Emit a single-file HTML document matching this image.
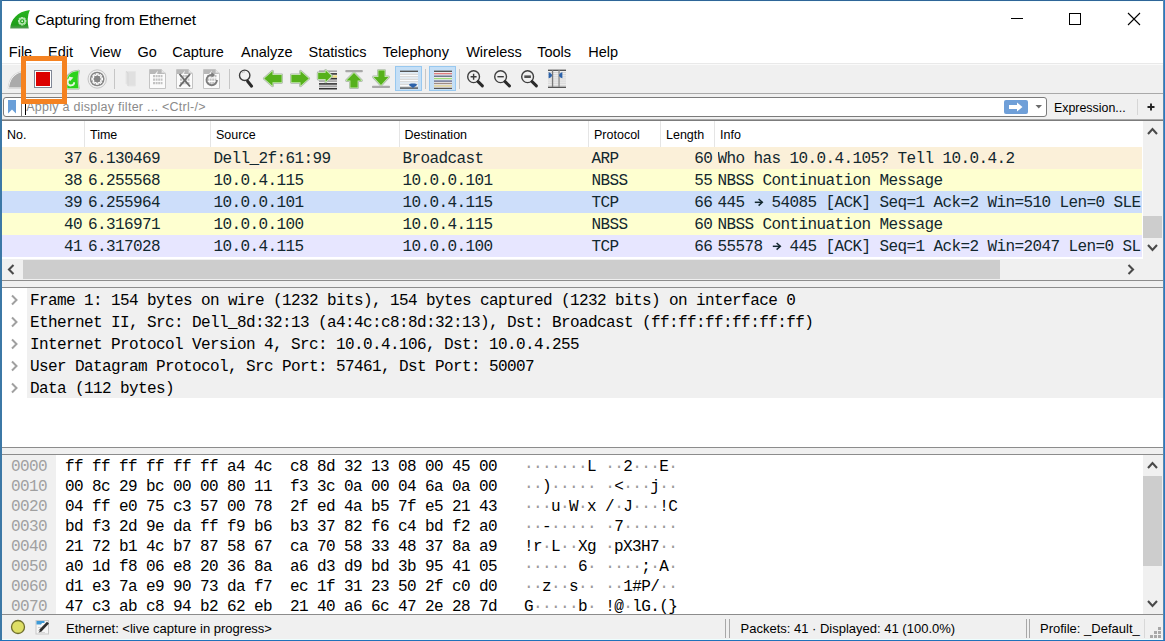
<!DOCTYPE html>
<html><head><meta charset="utf-8"><style>
html,body{margin:0;padding:0;}
body{width:1165px;height:641px;overflow:hidden;position:relative;background:#fff;}
body>div,body>svg{position:absolute;}
.t{white-space:pre;}
</style></head><body>
<div style="left:0px;top:0px;width:1165px;height:641px;background:#ffffff;"></div>
<div style="left:1px;top:63px;width:1163px;height:1px;background:#e9e9e9;"></div>
<div style="left:1px;top:64px;width:1163px;height:1px;background:#fafafa;"></div>
<div style="left:1px;top:65px;width:1163px;height:28px;background:#f0f0f0;"></div>
<div style="left:1px;top:93px;width:1163px;height:1px;background:#a9a9a9;"></div>
<div style="left:1px;top:94px;width:1163px;height:25px;background:#f0f0f0;"></div>
<div style="left:1px;top:119px;width:1163px;height:1px;background:#a9a9a9;"></div>
<div style="left:1px;top:120px;width:1163px;height:1px;background:#7c7c7c;"></div>
<svg style="left:8px;top:8px" width="24" height="23" viewBox="0 0 24 23">
<defs><linearGradient id="fg" x1="0" y1="0" x2="0" y2="1"><stop offset="0" stop-color="#27b51f"/><stop offset=".8" stop-color="#1f9e1a"/><stop offset="1" stop-color="#5a9a5a"/></linearGradient></defs>
<path d="M2.2 20.6 C2.6 12 9 3.5 21.8 2 C19.5 7.5 19 14 20.8 20.6 Z" fill="url(#fg)"/>
<path d="M16.85 12.67 L17.76 12.64 L17.76 13.76 L16.85 13.73 L16.44 14.70 L17.11 15.32 L16.32 16.11 L15.70 15.44 L14.73 15.85 L14.76 16.76 L13.64 16.76 L13.67 15.85 L12.70 15.44 L12.08 16.11 L11.29 15.32 L11.96 14.70 L11.55 13.73 L10.64 13.76 L10.64 12.64 L11.55 12.67 L11.96 11.70 L11.29 11.08 L12.08 10.29 L12.70 10.96 L13.67 10.55 L13.64 9.64 L14.76 9.64 L14.73 10.55 L15.70 10.96 L16.32 10.29 L17.11 11.08 L16.44 11.70 Z" fill="none" stroke="#b4e6b0" stroke-width="1.3"/>
<circle cx="14.2" cy="13.2" r="1" fill="#d8f4d8"/>
</svg>
<div class="t" style="left:35px;top:12.20px;font-size:15.5px;line-height:15.5px;font-family:'Liberation Sans', sans-serif;color:#000;letter-spacing:-.2px">Capturing from Ethernet</div>
<div style="left:1011px;top:18px;width:12px;height:1px;background:#000;"></div>
<div style="left:1069px;top:13px;width:10px;height:10px;border:1px solid #000"></div>
<svg style="left:1127px;top:12px" width="14" height="14" viewBox="0 0 14 14"><path d="M1 1 L13 13 M13 1 L1 13" stroke="#000" stroke-width="1.1"/></svg>
<div class="t" style="left:8.799999999999999px;top:45.25px;font-size:14.5px;line-height:14.5px;font-family:'Liberation Sans', sans-serif;color:#000;">File</div>
<div class="t" style="left:48.1px;top:45.25px;font-size:14.5px;line-height:14.5px;font-family:'Liberation Sans', sans-serif;color:#000;">Edit</div>
<div class="t" style="left:89.9px;top:45.25px;font-size:14.5px;line-height:14.5px;font-family:'Liberation Sans', sans-serif;color:#000;">View</div>
<div class="t" style="left:137.39999999999998px;top:45.25px;font-size:14.5px;line-height:14.5px;font-family:'Liberation Sans', sans-serif;color:#000;">Go</div>
<div class="t" style="left:172.2px;top:45.25px;font-size:14.5px;line-height:14.5px;font-family:'Liberation Sans', sans-serif;color:#000;">Capture</div>
<div class="t" style="left:241.0px;top:45.25px;font-size:14.5px;line-height:14.5px;font-family:'Liberation Sans', sans-serif;color:#000;">Analyze</div>
<div class="t" style="left:308.5px;top:45.25px;font-size:14.5px;line-height:14.5px;font-family:'Liberation Sans', sans-serif;color:#000;">Statistics</div>
<div class="t" style="left:382.8px;top:45.25px;font-size:14.5px;line-height:14.5px;font-family:'Liberation Sans', sans-serif;color:#000;">Telephony</div>
<div class="t" style="left:466.2px;top:45.25px;font-size:14.5px;line-height:14.5px;font-family:'Liberation Sans', sans-serif;color:#000;">Wireless</div>
<div class="t" style="left:537.2px;top:45.25px;font-size:14.5px;line-height:14.5px;font-family:'Liberation Sans', sans-serif;color:#000;">Tools</div>
<div class="t" style="left:588.2px;top:45.25px;font-size:14.5px;line-height:14.5px;font-family:'Liberation Sans', sans-serif;color:#000;">Help</div>
<svg style="left:4px;top:70px" width="20" height="20" viewBox="0 0 20 20"><path d="M5 17.5 C6 10 10 4 17 2.5 L17 17.5 Z" fill="#aaaaaa" stroke="#d4d4d4" stroke-width="2.6" stroke-linejoin="round"/><path d="M5 17.5 C6 10 10 4 17 2.5 L17 17.5 Z" fill="#aaaaaa" stroke="#ffffff" stroke-width="1.2" stroke-linejoin="round"/><path d="M5 17.5 C6 10 10 4 17 2.5 L17 17.5 Z" fill="#aaaaaa"/></svg>
<div style="left:34px;top:70px;width:16px;height:16px;border:1px solid #7f8796;background:#fff"></div>
<div style="left:36px;top:72px;width:14px;height:14px;background:#dc0000;"></div>
<svg style="left:65px;top:68px" width="16" height="22" viewBox="0 0 16 22"><path d="M2.3 20.3 L2.3 12 C2.3 7 6 3.6 13.6 2.9 C12.4 8 12.4 14 13.4 20.3 Z" fill="none" stroke="#a6a6a6" stroke-width="2.4" stroke-linejoin="round"/><path d="M2.3 20.3 L2.3 12 C2.3 7 6 3.6 13.6 2.9 C12.4 8 12.4 14 13.4 20.3 Z" fill="none" stroke="#c6f2bc" stroke-width="1.2" stroke-linejoin="round"/><path d="M2.3 20.3 L2.3 12 C2.3 7 6 3.6 13.6 2.9 C12.4 8 12.4 14 13.4 20.3 Z" fill="#2bd21c"/><path d="M9.2 14.2 A3.3 3.3 0 1 1 5.2 10.9" fill="none" stroke="#e4f8de" stroke-width="1.9"/><path d="M3.6 8.6 L8.4 9.6 L5 13.2Z" fill="#e4f8de"/></svg>
<svg style="left:87px;top:69px" width="21" height="21" viewBox="0 0 21 21"><circle cx="10.2" cy="10" r="9.2" fill="#f0f0f0" stroke="#c4c4c4" stroke-width="1"/><circle cx="10.2" cy="10" r="7.3" fill="#858585"/><path d="M14.11 9.14 L15.42 9.09 L15.42 10.91 L14.11 10.86 L13.57 12.16 L14.54 13.05 L13.25 14.34 L12.36 13.37 L11.06 13.91 L11.11 15.22 L9.29 15.22 L9.34 13.91 L8.04 13.37 L7.15 14.34 L5.86 13.05 L6.83 12.16 L6.29 10.86 L4.98 10.91 L4.98 9.09 L6.29 9.14 L6.83 7.84 L5.86 6.95 L7.15 5.66 L8.04 6.63 L9.34 6.09 L9.29 4.78 L11.11 4.78 L11.06 6.09 L12.36 6.63 L13.25 5.66 L14.54 6.95 L13.57 7.84 Z" fill="none" stroke="#ffffff" stroke-width="1.2" stroke-linejoin="miter"/><circle cx="10.2" cy="10" r="2.5" fill="#858585"/></svg>
<div style="left:114px;top:69px;width:1px;height:20px;background:#c6c6c6;"></div>
<div style="left:229px;top:69px;width:1px;height:20px;background:#c6c6c6;"></div>
<div style="left:425px;top:69px;width:1px;height:20px;background:#c6c6c6;"></div>
<div style="left:459px;top:69px;width:1px;height:20px;background:#c6c6c6;"></div>
<svg style="left:123px;top:70px" width="15" height="18" viewBox="0 0 15 18"><path d="M3 1.5 L12.5 1.5 L12.5 16 L5 16 L5 14 L3 14 Z" fill="#e0e0e0" stroke="#e6e6e6" stroke-width="1"/><path d="M3 1.5 L5 3 L5 16" fill="none" stroke="#d6d6d6" stroke-width="1"/></svg>
<svg style="left:149px;top:68px" width="18" height="21" viewBox="0 0 18 21"><path d="M0.5 1.5 L12.5 1.5 L16.5 5.5 L16.5 20.5 L0.5 20.5 Z" fill="#fbfbfb" stroke="#c4c4c4" stroke-width="1"/><path d="M1 2 L12.3 2 L16 5.7 L16 5.9 L1 5.9 Z" fill="#b8b8b8"/><path d="M6 5.9 L9 2.5 L8 5.9Z" fill="#f4f4f4"/><path d="M12.5 1.5 L12.5 5 L16.5 5" fill="#e8e8e8" stroke="#c4c4c4" stroke-width=".8"/><path d="M4 8.2 L13.5 8.2" stroke="#c2c2c2" stroke-width="2.2" stroke-dasharray="2 0.6 2 0.6 2 0.6 2"/><path d="M4 11.7 L13.5 11.7" stroke="#c2c2c2" stroke-width="2.2" stroke-dasharray="2 0.6 2 0.6 2 0.6 2"/><path d="M4 15.2 L13.5 15.2" stroke="#c2c2c2" stroke-width="2.2" stroke-dasharray="2 0.6 2 0.6 2 0.6 2"/></svg>
<svg style="left:176px;top:68px" width="18" height="21" viewBox="0 0 18 21"><path d="M0.5 1.5 L12.5 1.5 L16.5 5.5 L16.5 20.5 L0.5 20.5 Z" fill="#fbfbfb" stroke="#c4c4c4" stroke-width="1"/><path d="M1 2 L12.3 2 L16 5.7 L16 5.9 L1 5.9 Z" fill="#b8b8b8"/><path d="M6 5.9 L9 2.5 L8 5.9Z" fill="#f4f4f4"/><path d="M12.5 1.5 L12.5 5 L16.5 5" fill="#e8e8e8" stroke="#c4c4c4" stroke-width=".8"/><path d="M4 8.2 L13.5 8.2" stroke="#c2c2c2" stroke-width="2.2" stroke-dasharray="2 0.6 2 0.6 2 0.6 2"/><path d="M4 11.7 L13.5 11.7" stroke="#c2c2c2" stroke-width="2.2" stroke-dasharray="2 0.6 2 0.6 2 0.6 2"/><path d="M4 15.2 L13.5 15.2" stroke="#c2c2c2" stroke-width="2.2" stroke-dasharray="2 0.6 2 0.6 2 0.6 2"/><path d="M3.5 6 L14 18.5 M14 6 L3.5 18.5" stroke="#6a6a6a" stroke-width="1.9"/></svg>
<svg style="left:203px;top:68px" width="18" height="21" viewBox="0 0 18 21"><path d="M0.5 1.5 L12.5 1.5 L16.5 5.5 L16.5 20.5 L0.5 20.5 Z" fill="#fbfbfb" stroke="#c4c4c4" stroke-width="1"/><path d="M1 2 L12.3 2 L16 5.7 L16 5.9 L1 5.9 Z" fill="#b8b8b8"/><path d="M6 5.9 L9 2.5 L8 5.9Z" fill="#f4f4f4"/><path d="M12.5 1.5 L12.5 5 L16.5 5" fill="#e8e8e8" stroke="#c4c4c4" stroke-width=".8"/><path d="M4 8.2 L13.5 8.2" stroke="#c2c2c2" stroke-width="2.2" stroke-dasharray="2 0.6 2 0.6 2 0.6 2"/><path d="M4 11.7 L13.5 11.7" stroke="#c2c2c2" stroke-width="2.2" stroke-dasharray="2 0.6 2 0.6 2 0.6 2"/><path d="M4 15.2 L13.5 15.2" stroke="#c2c2c2" stroke-width="2.2" stroke-dasharray="2 0.6 2 0.6 2 0.6 2"/><path d="M13.9 12 A5.2 5.2 0 1 1 9.4 6.9" fill="none" stroke="#7c7c7c" stroke-width="1.9"/><path d="M8.4 4.2 L12.2 7 L8.4 9.6Z" fill="#7c7c7c"/></svg>
<svg style="left:237px;top:69px" width="18" height="20" viewBox="0 0 18 20"><circle cx="7.7" cy="6.3" r="5.2" fill="#f2f2f2" stroke="#3c3c3c" stroke-width="1.4"/><path d="M5 4 A3.2 3.2 0 0 1 8 2.8" fill="none" stroke="#bbb" stroke-width="1"/><path d="M10.6 12.2 L14.6 17.2" stroke="#2a2a2a" stroke-width="3" stroke-linecap="round"/></svg>
<svg style="left:262px;top:69px" width="22" height="19" viewBox="0 0 22 19"><path d="M2.3 9.5 L10.5 2.3 L10.5 6 L19.6 6 L19.6 13.3 L10.5 13.3 L10.5 16.8 Z" fill="none" stroke="#a9b3a9" stroke-width="2.8" stroke-linejoin="round"/><path d="M2.3 9.5 L10.5 2.3 L10.5 6 L19.6 6 L19.6 13.3 L10.5 13.3 L10.5 16.8 Z" fill="none" stroke="#c9ecb4" stroke-width="1.5" stroke-linejoin="round"/><path d="M2.3 9.5 L10.5 2.3 L10.5 6 L19.6 6 L19.6 13.3 L10.5 13.3 L10.5 16.8 Z" fill="#56b11c"/></svg>
<svg style="left:289px;top:69px" width="22" height="19" viewBox="0 0 22 19"><path d="M19.7 9.5 L11.5 2.3 L11.5 6 L2.4 6 L2.4 13.3 L11.5 13.3 L11.5 16.8 Z" fill="none" stroke="#a9b3a9" stroke-width="2.8" stroke-linejoin="round"/><path d="M19.7 9.5 L11.5 2.3 L11.5 6 L2.4 6 L2.4 13.3 L11.5 13.3 L11.5 16.8 Z" fill="none" stroke="#c9ecb4" stroke-width="1.5" stroke-linejoin="round"/><path d="M19.7 9.5 L11.5 2.3 L11.5 6 L2.4 6 L2.4 13.3 L11.5 13.3 L11.5 16.8 Z" fill="#56b11c"/></svg>
<svg style="left:316px;top:68px" width="23" height="22" viewBox="0 0 23 22"><rect x="3" y="2.4" width="18" height="1.6" fill="#a4a4a4"/><rect x="13" y="5.1" width="8" height="1.6" fill="#333"/><rect x="14" y="7.4" width="7" height="2.2" fill="#f0dc80"/><rect x="14" y="9.9" width="7" height="1.6" fill="#333"/><rect x="3" y="12.3" width="18" height="1.6" fill="#a4a4a4"/><rect x="3" y="15.1" width="18" height="1.6" fill="#333"/><rect x="3" y="17.4" width="18" height="1.6" fill="#a4a4a4"/><rect x="3" y="19.9" width="18" height="1.6" fill="#333"/><path d="M15.6 8 L9.6 2.4 L9.6 5 L2.2 5 L2.2 11 L9.6 11 L9.6 13.8 Z" fill="none" stroke="#a9b3a9" stroke-width="2.8" stroke-linejoin="round"/><path d="M15.6 8 L9.6 2.4 L9.6 5 L2.2 5 L2.2 11 L9.6 11 L9.6 13.8 Z" fill="none" stroke="#c9ecb4" stroke-width="1.5" stroke-linejoin="round"/><path d="M15.6 8 L9.6 2.4 L9.6 5 L2.2 5 L2.2 11 L9.6 11 L9.6 13.8 Z" fill="#56b11c"/></svg>
<svg style="left:343px;top:68px" width="22" height="22" viewBox="0 0 22 22"><rect x="2.3" y="2" width="17.5" height="2.2" rx=".8" fill="#a8a8a8"/><path d="M11 5 L18.4 12.6 L14.6 12.6 L14.6 19.6 L7.4 19.6 L7.4 12.6 L3.6 12.6 Z" fill="none" stroke="#a9b3a9" stroke-width="2.8" stroke-linejoin="round"/><path d="M11 5 L18.4 12.6 L14.6 12.6 L14.6 19.6 L7.4 19.6 L7.4 12.6 L3.6 12.6 Z" fill="none" stroke="#c9ecb4" stroke-width="1.5" stroke-linejoin="round"/><path d="M11 5 L18.4 12.6 L14.6 12.6 L14.6 19.6 L7.4 19.6 L7.4 12.6 L3.6 12.6 Z" fill="#56b11c"/></svg>
<svg style="left:370px;top:68px" width="22" height="22" viewBox="0 0 22 22"><rect x="2" y="17.8" width="18" height="2.2" rx=".8" fill="#a8a8a8"/><path d="M11 17 L18.4 9 L14.6 9 L14.6 2.6 L8.4 2.6 L8.4 9 L3.6 9 Z" fill="none" stroke="#a9b3a9" stroke-width="2.8" stroke-linejoin="round"/><path d="M11 17 L18.4 9 L14.6 9 L14.6 2.6 L8.4 2.6 L8.4 9 L3.6 9 Z" fill="none" stroke="#c9ecb4" stroke-width="1.5" stroke-linejoin="round"/><path d="M11 17 L18.4 9 L14.6 9 L14.6 2.6 L8.4 2.6 L8.4 9 L3.6 9 Z" fill="#56b11c"/></svg>
<div style="left:395px;top:66px;width:25px;height:23px;background:#c5dff6;border:1px solid #98c8ef"></div>
<svg style="left:400px;top:70px" width="18" height="19" viewBox="0 0 18 19"><rect x="0" y="0.6" width="18" height="1.4" fill="#555"/><rect x="0" y="2.6" width="18" height="1" fill="#ffffff"/><rect x="0" y="3.6" width="18" height="1.3" fill="#dcdad6"/><rect x="0" y="5.1" width="18" height="1" fill="#ffffff"/><rect x="0" y="6.1" width="18" height="1.3" fill="#dcdad6"/><rect x="0" y="7.6" width="18" height="1" fill="#ffffff"/><rect x="0" y="8.6" width="18" height="1.3" fill="#dcdad6"/><rect x="0" y="10.1" width="18" height="1" fill="#ffffff"/><rect x="0" y="11.1" width="18" height="1.3" fill="#dcdad6"/><rect x="0" y="12.6" width="18" height="1" fill="#ffffff"/><rect x="0" y="13.6" width="18" height="1.3" fill="#dcdad6"/><rect x="0" y="15.1" width="18" height="1" fill="#ffffff"/><rect x="0" y="16.1" width="18" height="1.3" fill="#dcdad6"/><rect x="0" y="17.4" width="18" height="1.4" fill="#555"/><path d="M9 14.6 C9 13 17 13 17 14.6 C17 16 14.5 16.5 13 18 C11.5 16.5 9 16 9 14.6Z" fill="#2c62aa"/></svg>
<div style="left:429px;top:66px;width:25px;height:23px;background:#c5dff6;border:1px solid #98c8ef"></div>
<svg style="left:434px;top:70px" width="18" height="19" viewBox="0 0 18 19"><rect x="0" y="0.6" width="18" height="1.5" fill="#555555"/><rect x="0" y="2.1" width="18" height=".95" fill="#f6eeee"/><rect x="0" y="3.0500000000000003" width="18" height="1.5" fill="#e07a7a"/><rect x="0" y="4.550000000000001" width="18" height=".95" fill="#f6eeee"/><rect x="0" y="5.5" width="18" height="1.5" fill="#707890"/><rect x="0" y="7.0" width="18" height=".95" fill="#f6eeee"/><rect x="0" y="7.95" width="18" height="1.5" fill="#9fdc7c"/><rect x="0" y="9.45" width="18" height=".95" fill="#f6eeee"/><rect x="0" y="10.4" width="18" height="1.5" fill="#6c7090"/><rect x="0" y="11.9" width="18" height=".95" fill="#f6eeee"/><rect x="0" y="12.85" width="18" height="1.5" fill="#9c8c84"/><rect x="0" y="14.35" width="18" height=".95" fill="#f6eeee"/><rect x="0" y="15.3" width="18" height="1.5" fill="#e6d088"/><rect x="0" y="16.8" width="18" height=".95" fill="#f6eeee"/><rect x="0" y="17.750000000000004" width="18" height="1.5" fill="#555555"/></svg>
<svg style="left:466px;top:69px" width="20" height="20" viewBox="0 0 20 20"><circle cx="7.6" cy="7.7" r="5.9" fill="#f0f0f0" stroke="#3f3f3f" stroke-width="1.4"/><path d="M12.1 12.6 L16.4 16.9" stroke="#2a2a2a" stroke-width="3" stroke-linecap="round"/><path d="M4.6 7.7 L10.6 7.7 M7.6 4.7 L7.6 10.7" stroke="#3a3a3a" stroke-width="1.4"/></svg>
<svg style="left:493px;top:69px" width="20" height="20" viewBox="0 0 20 20"><circle cx="7.6" cy="7.7" r="5.9" fill="#f0f0f0" stroke="#3f3f3f" stroke-width="1.4"/><path d="M12.1 12.6 L16.4 16.9" stroke="#2a2a2a" stroke-width="3" stroke-linecap="round"/><path d="M4.4 7.7 L10.8 7.7" stroke="#3a3a3a" stroke-width="1.4"/></svg>
<svg style="left:520px;top:69px" width="20" height="20" viewBox="0 0 20 20"><circle cx="7.6" cy="7.7" r="5.9" fill="#f0f0f0" stroke="#3f3f3f" stroke-width="1.4"/><path d="M12.1 12.6 L16.4 16.9" stroke="#2a2a2a" stroke-width="3" stroke-linecap="round"/><rect x="4.3" y="6.4" width="6.6" height="2.6" fill="#505050"/></svg>
<svg style="left:547px;top:68px" width="20" height="21" viewBox="0 0 20 21"><rect x="1" y="1.6" width="18" height="1.4" fill="#555"/><rect x="1" y="18.6" width="18" height="1.4" fill="#555"/><rect x="1" y="4.2" width="18" height=".9" fill="#cfcfcf"/><rect x="1" y="6.300000000000001" width="18" height=".9" fill="#cfcfcf"/><rect x="1" y="8.4" width="18" height=".9" fill="#cfcfcf"/><rect x="1" y="10.5" width="18" height=".9" fill="#cfcfcf"/><rect x="1" y="12.600000000000001" width="18" height=".9" fill="#cfcfcf"/><rect x="1" y="14.7" width="18" height=".9" fill="#cfcfcf"/><rect x="1" y="16.8" width="18" height=".9" fill="#cfcfcf"/><rect x="4.9" y="2" width="1.3" height="17" fill="#7a7a7a"/><rect x="11.4" y="2" width="1.3" height="17" fill="#8a8a8a"/><path d="M1.6 4.2 C4 4.6 5 6.5 5 7.3 C5 8.3 4 10 1.6 10.2Z" fill="#2c62aa"/><path d="M15.4 4.2 C13 4.6 12 6.5 12 7.3 C12 8.3 13 10 15.4 10.2Z" fill="#2c62aa"/></svg>
<div style="left:265px;top:99px;width:6px;height:6px;background:#f58220;"></div>
<div style="left:3px;top:97px;width:1042px;height:18px;border:1px solid #7b7b7b;border-radius:3px;background:#fff"></div>
<div style="left:21px;top:98px;width:1px;height:18px;background:#7b7b7b;"></div>
<svg style="left:8px;top:100px" width="9" height="14" viewBox="0 0 9 14"><path d="M0 0 L8 0 L8 13.5 L4 9.5 L0 13.5 Z" fill="#6a9fd8"/></svg>
<div style="left:25px;top:104px;width:1px;height:11px;background:#000;"></div>
<div class="t" style="left:26.2px;top:101.24px;font-size:12.5px;line-height:12.5px;font-family:'Liberation Sans', sans-serif;color:#8a8a8a;letter-spacing:.27px">Apply a display filter ... &lt;Ctrl-/&gt;</div>
<div style="left:1004px;top:100px;width:24px;height:14px;background:#6f9fd8;border-radius:2px"></div>
<svg style="left:1007px;top:101px" width="18" height="12" viewBox="0 0 18 12"><path d="M2 4 L10 4 L10 1.5 L15.5 6 L10 10.5 L10 8 L2 8 Z" fill="#fff"/></svg>
<svg style="left:1035px;top:104px" width="8" height="5" viewBox="0 0 8 5"><path d="M0.5 1 L7 1 L3.75 4.5Z" fill="#6a6a6a"/></svg>
<div class="t" style="left:1054px;top:101.72px;font-size:12.4px;line-height:12.4px;font-family:'Liberation Sans', sans-serif;color:#000;">Expression...</div>
<div style="left:1137px;top:99px;width:1px;height:16px;background:#d6d6d6;"></div>
<svg style="left:1146px;top:102px" width="10" height="10" viewBox="0 0 10 10"><path d="M5 1.5 L5 8.5 M1.5 5 L8.5 5" stroke="#222" stroke-width="1.9"/></svg>
<div style="left:1px;top:121px;width:1142px;height:26px;background:#ffffff;"></div>
<div style="left:84px;top:121px;width:1px;height:26px;background:#e5e5e5;"></div>
<div style="left:210px;top:121px;width:1px;height:26px;background:#e5e5e5;"></div>
<div style="left:399px;top:121px;width:1px;height:26px;background:#e5e5e5;"></div>
<div style="left:588px;top:121px;width:1px;height:26px;background:#e5e5e5;"></div>
<div style="left:660px;top:121px;width:1px;height:26px;background:#e5e5e5;"></div>
<div style="left:714px;top:121px;width:1px;height:26px;background:#e5e5e5;"></div>
<div class="t" style="left:7.0px;top:129.04px;font-size:12.5px;line-height:12.5px;font-family:'Liberation Sans', sans-serif;color:#000;">No.</div>
<div class="t" style="left:90.0px;top:129.04px;font-size:12.5px;line-height:12.5px;font-family:'Liberation Sans', sans-serif;color:#000;">Time</div>
<div class="t" style="left:216.0px;top:129.04px;font-size:12.5px;line-height:12.5px;font-family:'Liberation Sans', sans-serif;color:#000;">Source</div>
<div class="t" style="left:404.5px;top:129.04px;font-size:12.5px;line-height:12.5px;font-family:'Liberation Sans', sans-serif;color:#000;">Destination</div>
<div class="t" style="left:594.0px;top:129.04px;font-size:12.5px;line-height:12.5px;font-family:'Liberation Sans', sans-serif;color:#000;">Protocol</div>
<div class="t" style="left:666.0px;top:129.04px;font-size:12.5px;line-height:12.5px;font-family:'Liberation Sans', sans-serif;color:#000;">Length</div>
<div class="t" style="left:720.1px;top:129.04px;font-size:12.5px;line-height:12.5px;font-family:'Liberation Sans', sans-serif;color:#000;">Info</div>
<div style="left:1px;top:147px;width:1141px;height:22px;background:#fbf0d9;"></div>
<div class="t" style="right:1083px;top:150.84px;font-size:16px;line-height:16px;font-family:'Liberation Mono', monospace;color:#12272e;text-align:right;letter-spacing:-0.6px;">37</div>
<div class="t" style="left:88px;top:150.84px;font-size:16px;line-height:16px;font-family:'Liberation Mono', monospace;color:#12272e;letter-spacing:-0.6px;">6.130469</div>
<div class="t" style="left:213.5px;top:150.84px;font-size:16px;line-height:16px;font-family:'Liberation Mono', monospace;color:#12272e;letter-spacing:-0.6px;">Dell_2f:61:99</div>
<div class="t" style="left:402.5px;top:150.84px;font-size:16px;line-height:16px;font-family:'Liberation Mono', monospace;color:#12272e;letter-spacing:-0.6px;">Broadcast</div>
<div class="t" style="left:591.5px;top:150.84px;font-size:16px;line-height:16px;font-family:'Liberation Mono', monospace;color:#12272e;letter-spacing:-0.6px;">ARP</div>
<div class="t" style="right:452.79999999999995px;top:150.84px;font-size:16px;line-height:16px;font-family:'Liberation Mono', monospace;color:#12272e;text-align:right;letter-spacing:-0.6px;">60</div>
<div class="t" style="left:717.5px;top:150.84px;width:424px;overflow:hidden;font-size:16px;line-height:16px;font-family:'Liberation Mono', monospace;color:#12272e;letter-spacing:-0.6px;">Who has 10.0.4.105? Tell 10.0.4.2</div>
<div style="left:1px;top:169px;width:1141px;height:22px;background:#feffd0;"></div>
<div class="t" style="right:1083px;top:172.84px;font-size:16px;line-height:16px;font-family:'Liberation Mono', monospace;color:#12272e;text-align:right;letter-spacing:-0.6px;">38</div>
<div class="t" style="left:88px;top:172.84px;font-size:16px;line-height:16px;font-family:'Liberation Mono', monospace;color:#12272e;letter-spacing:-0.6px;">6.255568</div>
<div class="t" style="left:213.5px;top:172.84px;font-size:16px;line-height:16px;font-family:'Liberation Mono', monospace;color:#12272e;letter-spacing:-0.6px;">10.0.4.115</div>
<div class="t" style="left:402.5px;top:172.84px;font-size:16px;line-height:16px;font-family:'Liberation Mono', monospace;color:#12272e;letter-spacing:-0.6px;">10.0.0.101</div>
<div class="t" style="left:591.5px;top:172.84px;font-size:16px;line-height:16px;font-family:'Liberation Mono', monospace;color:#12272e;letter-spacing:-0.6px;">NBSS</div>
<div class="t" style="right:452.79999999999995px;top:172.84px;font-size:16px;line-height:16px;font-family:'Liberation Mono', monospace;color:#12272e;text-align:right;letter-spacing:-0.6px;">55</div>
<div class="t" style="left:717.5px;top:172.84px;width:424px;overflow:hidden;font-size:16px;line-height:16px;font-family:'Liberation Mono', monospace;color:#12272e;letter-spacing:-0.6px;">NBSS Continuation Message</div>
<div style="left:1px;top:191px;width:1141px;height:22px;background:#cddefa;"></div>
<div class="t" style="right:1083px;top:194.84px;font-size:16px;line-height:16px;font-family:'Liberation Mono', monospace;color:#12272e;text-align:right;letter-spacing:-0.6px;">39</div>
<div class="t" style="left:88px;top:194.84px;font-size:16px;line-height:16px;font-family:'Liberation Mono', monospace;color:#12272e;letter-spacing:-0.6px;">6.255964</div>
<div class="t" style="left:213.5px;top:194.84px;font-size:16px;line-height:16px;font-family:'Liberation Mono', monospace;color:#12272e;letter-spacing:-0.6px;">10.0.0.101</div>
<div class="t" style="left:402.5px;top:194.84px;font-size:16px;line-height:16px;font-family:'Liberation Mono', monospace;color:#12272e;letter-spacing:-0.6px;">10.0.4.115</div>
<div class="t" style="left:591.5px;top:194.84px;font-size:16px;line-height:16px;font-family:'Liberation Mono', monospace;color:#12272e;letter-spacing:-0.6px;">TCP</div>
<div class="t" style="right:452.79999999999995px;top:194.84px;font-size:16px;line-height:16px;font-family:'Liberation Mono', monospace;color:#12272e;text-align:right;letter-spacing:-0.6px;">66</div>
<div class="t" style="left:717.5px;top:194.84px;width:424px;overflow:hidden;font-size:16px;line-height:16px;font-family:'Liberation Mono', monospace;color:#12272e;letter-spacing:-0.6px;">445   54085 [ACK] Seq=1 Ack=2 Win=510 Len=0 SLE</div>
<div style="left:1px;top:213px;width:1141px;height:22px;background:#feffd0;"></div>
<div class="t" style="right:1083px;top:216.84px;font-size:16px;line-height:16px;font-family:'Liberation Mono', monospace;color:#12272e;text-align:right;letter-spacing:-0.6px;">40</div>
<div class="t" style="left:88px;top:216.84px;font-size:16px;line-height:16px;font-family:'Liberation Mono', monospace;color:#12272e;letter-spacing:-0.6px;">6.316971</div>
<div class="t" style="left:213.5px;top:216.84px;font-size:16px;line-height:16px;font-family:'Liberation Mono', monospace;color:#12272e;letter-spacing:-0.6px;">10.0.0.100</div>
<div class="t" style="left:402.5px;top:216.84px;font-size:16px;line-height:16px;font-family:'Liberation Mono', monospace;color:#12272e;letter-spacing:-0.6px;">10.0.4.115</div>
<div class="t" style="left:591.5px;top:216.84px;font-size:16px;line-height:16px;font-family:'Liberation Mono', monospace;color:#12272e;letter-spacing:-0.6px;">NBSS</div>
<div class="t" style="right:452.79999999999995px;top:216.84px;font-size:16px;line-height:16px;font-family:'Liberation Mono', monospace;color:#12272e;text-align:right;letter-spacing:-0.6px;">60</div>
<div class="t" style="left:717.5px;top:216.84px;width:424px;overflow:hidden;font-size:16px;line-height:16px;font-family:'Liberation Mono', monospace;color:#12272e;letter-spacing:-0.6px;">NBSS Continuation Message</div>
<div style="left:1px;top:235px;width:1141px;height:22px;background:#e7e6ff;"></div>
<div class="t" style="right:1083px;top:238.84px;font-size:16px;line-height:16px;font-family:'Liberation Mono', monospace;color:#12272e;text-align:right;letter-spacing:-0.6px;">41</div>
<div class="t" style="left:88px;top:238.84px;font-size:16px;line-height:16px;font-family:'Liberation Mono', monospace;color:#12272e;letter-spacing:-0.6px;">6.317028</div>
<div class="t" style="left:213.5px;top:238.84px;font-size:16px;line-height:16px;font-family:'Liberation Mono', monospace;color:#12272e;letter-spacing:-0.6px;">10.0.4.115</div>
<div class="t" style="left:402.5px;top:238.84px;font-size:16px;line-height:16px;font-family:'Liberation Mono', monospace;color:#12272e;letter-spacing:-0.6px;">10.0.0.100</div>
<div class="t" style="left:591.5px;top:238.84px;font-size:16px;line-height:16px;font-family:'Liberation Mono', monospace;color:#12272e;letter-spacing:-0.6px;">TCP</div>
<div class="t" style="right:452.79999999999995px;top:238.84px;font-size:16px;line-height:16px;font-family:'Liberation Mono', monospace;color:#12272e;text-align:right;letter-spacing:-0.6px;">66</div>
<div class="t" style="left:717.5px;top:238.84px;width:424px;overflow:hidden;font-size:16px;line-height:16px;font-family:'Liberation Mono', monospace;color:#12272e;letter-spacing:-0.6px;">55578   445 [ACK] Seq=1 Ack=2 Win=2047 Len=0 SL</div>
<svg style="left:753.5px;top:197px" width="10" height="11" viewBox="0 0 10 11"><path d="M0.8 5.3 L8.2 5.3" stroke="#12272e" stroke-width="1.5"/><path d="M4.6 2 L8.3 5.3 L4.6 8.6" fill="none" stroke="#12272e" stroke-width="1.5"/></svg>
<svg style="left:771.5px;top:241px" width="10" height="11" viewBox="0 0 10 11"><path d="M0.8 5.3 L8.2 5.3" stroke="#12272e" stroke-width="1.5"/><path d="M4.6 2 L8.3 5.3 L4.6 8.6" fill="none" stroke="#12272e" stroke-width="1.5"/></svg>
<div style="left:1143px;top:121px;width:20px;height:138px;background:#f0f0f0;"></div>
<div style="left:1143px;top:216px;width:19px;height:22px;background:#cdcdcd;"></div>
<svg style="left:1146px;top:126px" width="13" height="10" viewBox="0 0 13 10"><path d="M2 8 L6.5 3 L11 8" fill="none" stroke="#4a4a4a" stroke-width="2.1"/></svg>
<svg style="left:1146px;top:243px" width="13" height="10" viewBox="0 0 13 10"><path d="M2 2 L6.5 7 L11 2" fill="none" stroke="#4a4a4a" stroke-width="2.1"/></svg>
<div style="left:1px;top:257px;width:1142px;height:2px;background:#ffffff;"></div>
<div style="left:1143px;top:257px;width:20px;height:2px;background:#f0f0f0;"></div>
<div style="left:1px;top:259px;width:1162px;height:21px;background:#f0f0f0;"></div>
<div style="left:23px;top:260px;width:977px;height:19px;background:#cdcdcd;"></div>
<svg style="left:6px;top:263px" width="10" height="13" viewBox="0 0 10 13"><path d="M7.5 2 L3 6.5 L7.5 11" fill="none" stroke="#4a4a4a" stroke-width="2.1"/></svg>
<svg style="left:1126px;top:263px" width="10" height="13" viewBox="0 0 10 13"><path d="M2.5 2 L7 6.5 L2.5 11" fill="none" stroke="#4a4a4a" stroke-width="2.1"/></svg>
<div style="left:1px;top:280px;width:1162px;height:1px;background:#8c8c8c;"></div>
<div style="left:1px;top:281px;width:1162px;height:6px;background:#f0f0f0;"></div>
<div style="left:1px;top:287px;width:1162px;height:1px;background:#8c8c8c;"></div>
<div style="left:1px;top:288px;width:1162px;height:159px;background:#ffffff;"></div>
<div style="left:27px;top:288px;width:1136px;height:110px;background:#f0f0f0;"></div>
<svg style="left:10px;top:294px" width="9" height="12" viewBox="0 0 9 12"><path d="M2 1.5 L6.5 6 L2 10.5" fill="none" stroke="#a0a0a0" stroke-width="2"/></svg>
<div class="t" style="left:30px;top:292.84px;font-size:16px;line-height:16px;font-family:'Liberation Mono', monospace;color:#000;letter-spacing:-0.6px;">Frame 1: 154 bytes on wire (1232 bits), 154 bytes captured (1232 bits) on interface 0</div>
<svg style="left:10px;top:316px" width="9" height="12" viewBox="0 0 9 12"><path d="M2 1.5 L6.5 6 L2 10.5" fill="none" stroke="#a0a0a0" stroke-width="2"/></svg>
<div class="t" style="left:30px;top:314.84px;font-size:16px;line-height:16px;font-family:'Liberation Mono', monospace;color:#000;letter-spacing:-0.6px;">Ethernet II, Src: Dell_8d:32:13 (a4:4c:c8:8d:32:13), Dst: Broadcast (ff:ff:ff:ff:ff:ff)</div>
<svg style="left:10px;top:338px" width="9" height="12" viewBox="0 0 9 12"><path d="M2 1.5 L6.5 6 L2 10.5" fill="none" stroke="#a0a0a0" stroke-width="2"/></svg>
<div class="t" style="left:30px;top:336.84px;font-size:16px;line-height:16px;font-family:'Liberation Mono', monospace;color:#000;letter-spacing:-0.6px;">Internet Protocol Version 4, Src: 10.0.4.106, Dst: 10.0.4.255</div>
<svg style="left:10px;top:360px" width="9" height="12" viewBox="0 0 9 12"><path d="M2 1.5 L6.5 6 L2 10.5" fill="none" stroke="#a0a0a0" stroke-width="2"/></svg>
<div class="t" style="left:30px;top:358.84px;font-size:16px;line-height:16px;font-family:'Liberation Mono', monospace;color:#000;letter-spacing:-0.6px;">User Datagram Protocol, Src Port: 57461, Dst Port: 50007</div>
<svg style="left:10px;top:382px" width="9" height="12" viewBox="0 0 9 12"><path d="M2 1.5 L6.5 6 L2 10.5" fill="none" stroke="#a0a0a0" stroke-width="2"/></svg>
<div class="t" style="left:30px;top:380.84px;font-size:16px;line-height:16px;font-family:'Liberation Mono', monospace;color:#000;letter-spacing:-0.6px;">Data (112 bytes)</div>
<div style="left:1px;top:447px;width:1162px;height:1px;background:#8c8c8c;"></div>
<div style="left:1px;top:448px;width:1162px;height:6px;background:#f0f0f0;"></div>
<div style="left:1px;top:454px;width:1162px;height:1px;background:#8c8c8c;"></div>
<div style="left:1px;top:455px;width:1162px;height:159px;background:#ffffff;"></div>
<div style="left:2px;top:455px;width:54px;height:159px;background:#f0f0f0;"></div>
<div class="t" style="left:11px;top:458.84px;font-size:16px;line-height:16px;font-family:'Liberation Mono', monospace;color:#a0a0a0;letter-spacing:-0.6px;">0000</div>
<div class="t" style="left:65px;top:458.84px;font-size:16px;line-height:16px;font-family:'Liberation Mono', monospace;color:#000;letter-spacing:-0.6px;">ff ff ff ff ff ff a4 4c  c8 8d 32 13 08 00 45 00</div>
<div class="t" style="left:524px;top:458.84px;font-size:16px;line-height:16px;font-family:'Liberation Mono', monospace;color:#000;letter-spacing:-0.6px;"><span style="color:#9a9a9a">·</span><span style="color:#9a9a9a">·</span><span style="color:#9a9a9a">·</span><span style="color:#9a9a9a">·</span><span style="color:#9a9a9a">·</span><span style="color:#9a9a9a">·</span><span style="color:#9a9a9a">·</span>L <span style="color:#9a9a9a">·</span><span style="color:#9a9a9a">·</span>2<span style="color:#9a9a9a">·</span><span style="color:#9a9a9a">·</span><span style="color:#9a9a9a">·</span>E<span style="color:#9a9a9a">·</span></div>
<div class="t" style="left:11px;top:478.84px;font-size:16px;line-height:16px;font-family:'Liberation Mono', monospace;color:#a0a0a0;letter-spacing:-0.6px;">0010</div>
<div class="t" style="left:65px;top:478.84px;font-size:16px;line-height:16px;font-family:'Liberation Mono', monospace;color:#000;letter-spacing:-0.6px;">00 8c 29 bc 00 00 80 11  f3 3c 0a 00 04 6a 0a 00</div>
<div class="t" style="left:524px;top:478.84px;font-size:16px;line-height:16px;font-family:'Liberation Mono', monospace;color:#000;letter-spacing:-0.6px;"><span style="color:#9a9a9a">·</span><span style="color:#9a9a9a">·</span>)<span style="color:#9a9a9a">·</span><span style="color:#9a9a9a">·</span><span style="color:#9a9a9a">·</span><span style="color:#9a9a9a">·</span><span style="color:#9a9a9a">·</span> <span style="color:#9a9a9a">·</span><<span style="color:#9a9a9a">·</span><span style="color:#9a9a9a">·</span><span style="color:#9a9a9a">·</span>j<span style="color:#9a9a9a">·</span><span style="color:#9a9a9a">·</span></div>
<div class="t" style="left:11px;top:498.84px;font-size:16px;line-height:16px;font-family:'Liberation Mono', monospace;color:#a0a0a0;letter-spacing:-0.6px;">0020</div>
<div class="t" style="left:65px;top:498.84px;font-size:16px;line-height:16px;font-family:'Liberation Mono', monospace;color:#000;letter-spacing:-0.6px;">04 ff e0 75 c3 57 00 78  2f ed 4a b5 7f e5 21 43</div>
<div class="t" style="left:524px;top:498.84px;font-size:16px;line-height:16px;font-family:'Liberation Mono', monospace;color:#000;letter-spacing:-0.6px;"><span style="color:#9a9a9a">·</span><span style="color:#9a9a9a">·</span><span style="color:#9a9a9a">·</span>u<span style="color:#9a9a9a">·</span>W<span style="color:#9a9a9a">·</span>x /<span style="color:#9a9a9a">·</span>J<span style="color:#9a9a9a">·</span><span style="color:#9a9a9a">·</span><span style="color:#9a9a9a">·</span>!C</div>
<div class="t" style="left:11px;top:518.84px;font-size:16px;line-height:16px;font-family:'Liberation Mono', monospace;color:#a0a0a0;letter-spacing:-0.6px;">0030</div>
<div class="t" style="left:65px;top:518.84px;font-size:16px;line-height:16px;font-family:'Liberation Mono', monospace;color:#000;letter-spacing:-0.6px;">bd f3 2d 9e da ff f9 b6  b3 37 82 f6 c4 bd f2 a0</div>
<div class="t" style="left:524px;top:518.84px;font-size:16px;line-height:16px;font-family:'Liberation Mono', monospace;color:#000;letter-spacing:-0.6px;"><span style="color:#9a9a9a">·</span><span style="color:#9a9a9a">·</span>-<span style="color:#9a9a9a">·</span><span style="color:#9a9a9a">·</span><span style="color:#9a9a9a">·</span><span style="color:#9a9a9a">·</span><span style="color:#9a9a9a">·</span> <span style="color:#9a9a9a">·</span>7<span style="color:#9a9a9a">·</span><span style="color:#9a9a9a">·</span><span style="color:#9a9a9a">·</span><span style="color:#9a9a9a">·</span><span style="color:#9a9a9a">·</span><span style="color:#9a9a9a">·</span></div>
<div class="t" style="left:11px;top:538.84px;font-size:16px;line-height:16px;font-family:'Liberation Mono', monospace;color:#a0a0a0;letter-spacing:-0.6px;">0040</div>
<div class="t" style="left:65px;top:538.84px;font-size:16px;line-height:16px;font-family:'Liberation Mono', monospace;color:#000;letter-spacing:-0.6px;">21 72 b1 4c b7 87 58 67  ca 70 58 33 48 37 8a a9</div>
<div class="t" style="left:524px;top:538.84px;font-size:16px;line-height:16px;font-family:'Liberation Mono', monospace;color:#000;letter-spacing:-0.6px;">!r<span style="color:#9a9a9a">·</span>L<span style="color:#9a9a9a">·</span><span style="color:#9a9a9a">·</span>Xg <span style="color:#9a9a9a">·</span>pX3H7<span style="color:#9a9a9a">·</span><span style="color:#9a9a9a">·</span></div>
<div class="t" style="left:11px;top:558.84px;font-size:16px;line-height:16px;font-family:'Liberation Mono', monospace;color:#a0a0a0;letter-spacing:-0.6px;">0050</div>
<div class="t" style="left:65px;top:558.84px;font-size:16px;line-height:16px;font-family:'Liberation Mono', monospace;color:#000;letter-spacing:-0.6px;">a0 1d f8 06 e8 20 36 8a  a6 d3 d9 bd 3b 95 41 05</div>
<div class="t" style="left:524px;top:558.84px;font-size:16px;line-height:16px;font-family:'Liberation Mono', monospace;color:#000;letter-spacing:-0.6px;"><span style="color:#9a9a9a">·</span><span style="color:#9a9a9a">·</span><span style="color:#9a9a9a">·</span><span style="color:#9a9a9a">·</span><span style="color:#9a9a9a">·</span> 6<span style="color:#9a9a9a">·</span> <span style="color:#9a9a9a">·</span><span style="color:#9a9a9a">·</span><span style="color:#9a9a9a">·</span><span style="color:#9a9a9a">·</span>;<span style="color:#9a9a9a">·</span>A<span style="color:#9a9a9a">·</span></div>
<div class="t" style="left:11px;top:578.84px;font-size:16px;line-height:16px;font-family:'Liberation Mono', monospace;color:#a0a0a0;letter-spacing:-0.6px;">0060</div>
<div class="t" style="left:65px;top:578.84px;font-size:16px;line-height:16px;font-family:'Liberation Mono', monospace;color:#000;letter-spacing:-0.6px;">d1 e3 7a e9 90 73 da f7  ec 1f 31 23 50 2f c0 d0</div>
<div class="t" style="left:524px;top:578.84px;font-size:16px;line-height:16px;font-family:'Liberation Mono', monospace;color:#000;letter-spacing:-0.6px;"><span style="color:#9a9a9a">·</span><span style="color:#9a9a9a">·</span>z<span style="color:#9a9a9a">·</span><span style="color:#9a9a9a">·</span>s<span style="color:#9a9a9a">·</span><span style="color:#9a9a9a">·</span> <span style="color:#9a9a9a">·</span><span style="color:#9a9a9a">·</span>1#P/<span style="color:#9a9a9a">·</span><span style="color:#9a9a9a">·</span></div>
<div class="t" style="left:11px;top:598.84px;font-size:16px;line-height:16px;font-family:'Liberation Mono', monospace;color:#a0a0a0;letter-spacing:-0.6px;">0070</div>
<div class="t" style="left:65px;top:598.84px;font-size:16px;line-height:16px;font-family:'Liberation Mono', monospace;color:#000;letter-spacing:-0.6px;">47 c3 ab c8 94 b2 62 eb  21 40 a6 6c 47 2e 28 7d</div>
<div class="t" style="left:524px;top:598.84px;font-size:16px;line-height:16px;font-family:'Liberation Mono', monospace;color:#000;letter-spacing:-0.6px;">G<span style="color:#9a9a9a">·</span><span style="color:#9a9a9a">·</span><span style="color:#9a9a9a">·</span><span style="color:#9a9a9a">·</span><span style="color:#9a9a9a">·</span>b<span style="color:#9a9a9a">·</span> !@<span style="color:#9a9a9a">·</span>lG.(}</div>
<div style="left:1143px;top:455px;width:20px;height:159px;background:#f0f0f0;"></div>
<div style="left:1143px;top:476px;width:19px;height:90px;background:#cdcdcd;"></div>
<svg style="left:1146px;top:460px" width="13" height="10" viewBox="0 0 13 10"><path d="M2 8 L6.5 3 L11 8" fill="none" stroke="#4a4a4a" stroke-width="2.1"/></svg>
<svg style="left:1146px;top:599px" width="13" height="10" viewBox="0 0 13 10"><path d="M2 2 L6.5 7 L11 2" fill="none" stroke="#4a4a4a" stroke-width="2.1"/></svg>
<div style="left:1px;top:614px;width:1162px;height:1px;background:#8c8c8c;"></div>
<div style="left:1px;top:615px;width:1162px;height:25px;background:#f0f0f0;"></div>
<svg style="left:10px;top:619px" width="16" height="16" viewBox="0 0 16 16"><circle cx="8" cy="8" r="6.5" fill="#dedf66" stroke="#6e6e2c" stroke-width="1.3"/></svg>
<svg style="left:35px;top:619px" width="15" height="16" viewBox="0 0 15 16"><rect x="1" y="1.5" width="12.5" height="13.5" fill="#f6f6f6" stroke="#c8c8c8" stroke-width="1"/><path d="M1.5 2 L9.5 2 L9.5 4 L7 4 L6 5.5 L1.5 5.5Z" fill="#3e9ad6"/><g fill="#d0d0d0"><rect x="3" y="8" width="3" height="1"/><rect x="3" y="11" width="3" height="1"/><rect x="3" y="13" width="7" height=".8"/></g><path d="M5.2 11.8 L13 3.6" stroke="#2e2e2e" stroke-width="2.8"/><path d="M3.8 13.4 L5 11.2 L6.3 12.5Z" fill="#2e2e2e"/></svg>
<div class="t" style="left:66px;top:621.62px;font-size:13px;line-height:13px;font-family:'Liberation Sans', sans-serif;color:#000;">Ethernet: &lt;live capture in progress&gt;</div>
<div style="left:725px;top:619px;width:1px;height:19px;background:#a8a8a8;"></div>
<div style="left:729px;top:619px;width:1px;height:19px;background:#a8a8a8;"></div>
<div style="left:1026px;top:619px;width:1px;height:19px;background:#a8a8a8;"></div>
<div style="left:1029px;top:619px;width:1px;height:19px;background:#a8a8a8;"></div>
<div style="left:1144px;top:619px;width:1px;height:19px;background:#d8d8d8;"></div>
<div class="t" style="left:740.5px;top:621.91px;font-size:13px;line-height:13px;font-family:'Liberation Sans', sans-serif;color:#000;">Packets: 41 · Displayed: 41 (100.0%)</div>
<div class="t" style="left:1040px;top:621.91px;font-size:13px;line-height:13px;font-family:'Liberation Sans', sans-serif;color:#000;">Profile: _Default_</div>
<div style="left:1158px;top:627px;width:3px;height:3px;background:#a8a8a8;"></div>
<div style="left:1154px;top:631px;width:3px;height:3px;background:#a8a8a8;"></div>
<div style="left:1158px;top:631px;width:3px;height:3px;background:#a8a8a8;"></div>
<div style="left:1150px;top:635px;width:3px;height:3px;background:#a8a8a8;"></div>
<div style="left:1154px;top:635px;width:3px;height:3px;background:#a8a8a8;"></div>
<div style="left:1158px;top:635px;width:3px;height:3px;background:#a8a8a8;"></div>
<div style="left:21px;top:56px;width:36px;height:38px;border:5px solid #f58220;box-sizing:content-box"></div>
<div style="left:0;top:1px;width:1165px;height:1px;background:#f2fefe;opacity:.7"></div>
<div style="left:0;top:639px;width:1165px;height:1px;background:#eefefe"></div>
<div style="left:0;top:0;width:1165px;height:1px;background:#2e6598"></div>
<div style="left:0;top:0;width:2px;height:641px;background:#3c78a6"></div>
<div style="left:1163px;top:0;width:1px;height:641px;background:#5b88b0"></div>
<div style="left:1164px;top:0;width:1px;height:641px;background:#2a7ac2"></div>
<div style="left:0;top:640px;width:1165px;height:1px;background:#1f72ba"></div>
</body></html>
